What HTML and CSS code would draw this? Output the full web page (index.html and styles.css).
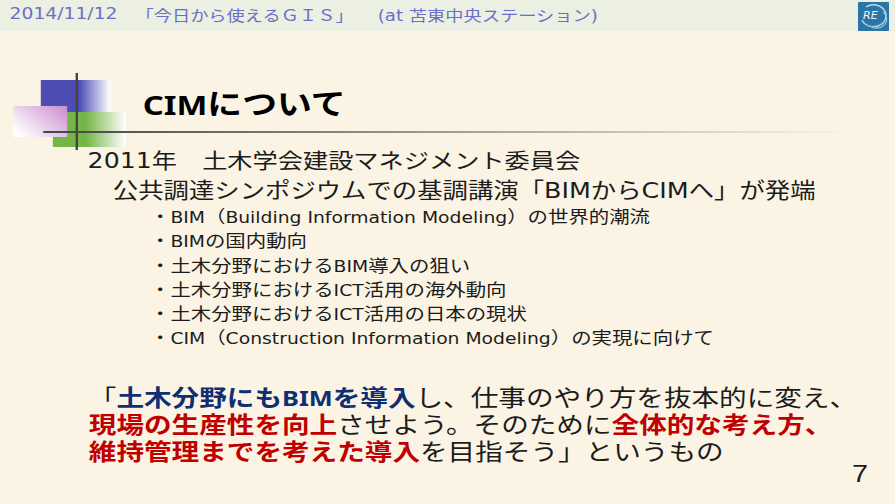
FILE: index.html
```html
<!DOCTYPE html>
<html lang="ja">
<head>
<meta charset="utf-8">
<title>CIMについて</title>
<link rel="stylesheet" href="styles.css">
</head>
<body>
<div class="stage">
  <header class="topbar">
    <span class="top-date">2014/11/12</span>
    <span class="top-title">「今日から使えるＧＩＳ」</span>
    <span class="top-place">(at 苫東中央ステーション)</span>
  </header>
  <div class="deco" aria-hidden="true">
    <div class="sq sq-blue"></div>
    <div class="sq sq-green"></div>
    <div class="sq sq-pink"></div>
    <div class="vline"></div>
  </div>
  <main class="content">
    <h1 class="title"><span class="en">CIM</span>について</h1>
    <div class="rule"></div>
    <p class="lead">2011年　土木学会建設マネジメント委員会</p>
    <p class="sub">公共調達シンポジウムでの基調講演「BIMからCIMへ」が発端</p>
    <ul class="items">
      <li>・<span class="en">BIM</span>（<span class="en">Building Information Modeling</span>）の世界的潮流</li>
      <li>・<span class="en">BIM</span>の国内動向</li>
      <li>・土木分野における<span class="en">BIM</span>導入の狙い</li>
      <li>・土木分野における<span class="en">ICT</span>活用の海外動向</li>
      <li>・土木分野における<span class="en">ICT</span>活用の日本の現状</li>
      <li>・<span class="en">CIM</span>（<span class="en">Construction Information Modeling</span>）の実現に向けて</li>
    </ul>
    <p class="quote">「<b class="navy">土木分野にも<span class="en">BIM</span>を導入</b>し、仕事のやり方を抜本的に変え、<br><b class="red">現場の生産性を向上</b>させよう。そのために<b class="red">全体的な考え方、</b><br><b class="red">維持管理までを考えた導入</b>を目指そう」というもの</p>
  </main>
  <div class="page">7</div>
</div>
<svg class="logo" viewBox="0 0 31 29" aria-hidden="true">
  <rect width="31" height="29" rx="1" fill="#2a75a8"/>
  <path d="M8 5 A12.5 11 0 1 1 4 18" fill="none" stroke="#c3d9e3" stroke-width="1.5"/>
  <path d="M12 24 A10 9 0 0 0 25 10" fill="none" stroke="#9cc2d5" stroke-width="1.2"/>
  <path d="M5 21 A13 10 0 0 0 27 17" fill="none" stroke="#7fb0c9" stroke-width="1"/>
  <text x="5" y="17" class="logo-text">RE</text>
</svg>
</body>
</html>
```
FILE: styles.css
```css
* { box-sizing: border-box; }
html, body { margin: 0; height: 100%; overflow: hidden; }
body { background: #fbf4e4; position: relative; width: 895px; height: 504px; }
.stage {
  width: 746px;
  height: 504px;
  transform: scaleX(1.2);
  transform-origin: 0 0;
  position: relative;
  font-family: "DejaVu Sans", "Noto Sans CJK JP", sans-serif;
  color: #1c1c1c;
}
.en { line-height: 1; }
.topbar {
  height: 31px;
  background: #ecf0e2;
  display: flex;
  align-items: center;
  padding: 0 0 3px 8px;
  font-size: 15.2px;
  color: #6a6fc8;
  white-space: pre;
}
.top-date { font-size: 15.6px; }
.top-title { margin-left: 15px; }
.top-place { margin-left: 20px; }
.deco { position: absolute; left: 0; top: 0; }
.sq { position: absolute; }
.sq-blue { left: 34px; top: 80px; width: 58px; height: 54px; background: linear-gradient(90deg, #4d4db4 55%, #fff 100%); }
.sq-green { left: 44px; top: 112px; width: 61px; height: 35px; background: linear-gradient(90deg, #76b648 45%, #fff 100%); }
.sq-pink { left: 11px; top: 106px; width: 45px; height: 31px; background: linear-gradient(45deg, #fff 10%, #c98ccd 100%); }
.vline { position: absolute; left: 63px; top: 73px; width: 2px; height: 77px; background: #444; }
.content { padding: 0; }
.title { margin: 0; padding: 54px 0 0 119px; font-size: 29px; line-height: 41px; height: 95px; color: #000; font-weight: 700; }
.title .en { font-family: "Noto Sans", sans-serif; font-size: 0.94em; }
.rule { position: relative; margin: 5px 39px 0 36px; height: 2px; background: linear-gradient(90deg, #444, #fbf4e4); }
.lead { margin: 0; padding: 13px 0 0 73px; font-size: 21px; line-height: 30px; white-space: nowrap; }
.sub { margin: 0; padding-left: 94px; font-size: 21.15px; line-height: 29px; white-space: nowrap; }
.items { list-style: none; margin: 0; padding: 0 0 0 125px; font-size: 17px; line-height: 24.3px; white-space: nowrap; }
.items .en { font-size: 0.92em; }
.quote { margin: 0; padding: 34px 0 0 74px; font-size: 23px; line-height: 27px; white-space: nowrap; }
.quote b { font-weight: 700; }
.quote .en { font-family: "Noto Sans", sans-serif; font-size: 0.92em; }
.navy { color: #0f2f72; }
.red { color: #c00000; }
.page { position: absolute; left: 710px; top: 459px; font-family: "Liberation Sans", sans-serif; font-size: 24px; line-height: 30px; }
.logo { position: absolute; left: 858px; top: 2px; width: 31px; height: 29px; }
.logo-text { font: italic 400 11px "DejaVu Sans", sans-serif; fill: #f0f5f8; }
```
